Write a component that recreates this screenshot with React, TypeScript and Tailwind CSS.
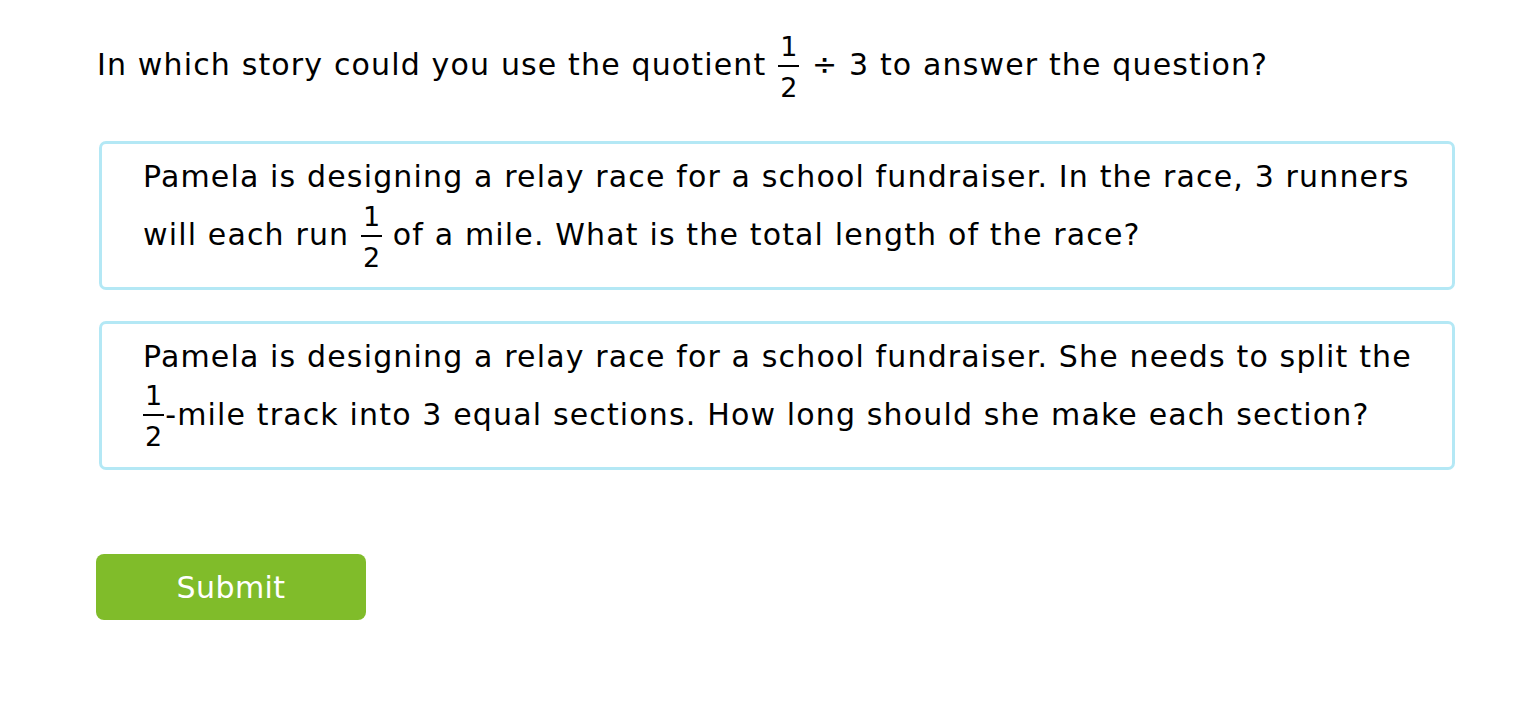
function Frac({ n, d, className = "" }: { n: string; d: string; className?: string }) {
  return (
    <span
      className={`my-[-5px] inline-flex flex-col items-center align-middle text-[27px] leading-[27px] tracking-normal ${className}`}
    >
      <span className="px-[2px] pb-[5px]">{n}</span>
      <span className="w-full border-t-[2px] border-black" />
      <span className="px-[2px] pt-[7px]">{d}</span>
    </span>
  );
}

function Choice({ children, className = "pb-[21px]" }: { children: React.ReactNode; className?: string }) {
  return (
    <div
      className={`rounded-[7px] border-[3px] border-[#b4e8f5] bg-white pl-[41px] pr-[30px] pt-[4px] text-[30px] leading-[58px] ${className}`}
    >
      {children}
    </div>
  );
}

export default function App() {
  return (
    <div className="min-h-screen bg-white pl-[97px] pr-[77px] pt-[33px] tracking-[1.15px] text-black [font-family:'DejaVu_Sans',Verdana,sans-serif]">
      <p className="text-[30px] leading-[64px]">
        In which story could you use the quotient <Frac n="1" d="2" className="ml-[1px] mr-[2px]" /> ÷ 3 to
        answer the question?
      </p>

      <div className="mt-[44px] flex flex-col gap-[31px] pl-[2px]">
        <Choice>
          Pamela is designing a relay race for a school fundraiser. In the race, 3 runners
          <br />
          will each run <Frac n="1" d="2" className="ml-[1px] mr-0" /> of a mile. What is the total length of the
          race?
        </Choice>
        <Choice className="pb-[22px]">
          Pamela is designing a relay race for a school fundraiser. She needs to split the
          <br />
          <Frac n="1" d="2" className="ml-[0px] mr-[1px]" />-mile track into 3 equal sections. How long should she
          make each section?
        </Choice>
      </div>

      <button className="-ml-[1px] mt-[84px] flex h-[66px] w-[270px] items-center justify-center rounded-[8px] bg-[#80bc2a] text-[30px] tracking-[0.4px] text-white">
        Submit
      </button>
    </div>
  );
}
